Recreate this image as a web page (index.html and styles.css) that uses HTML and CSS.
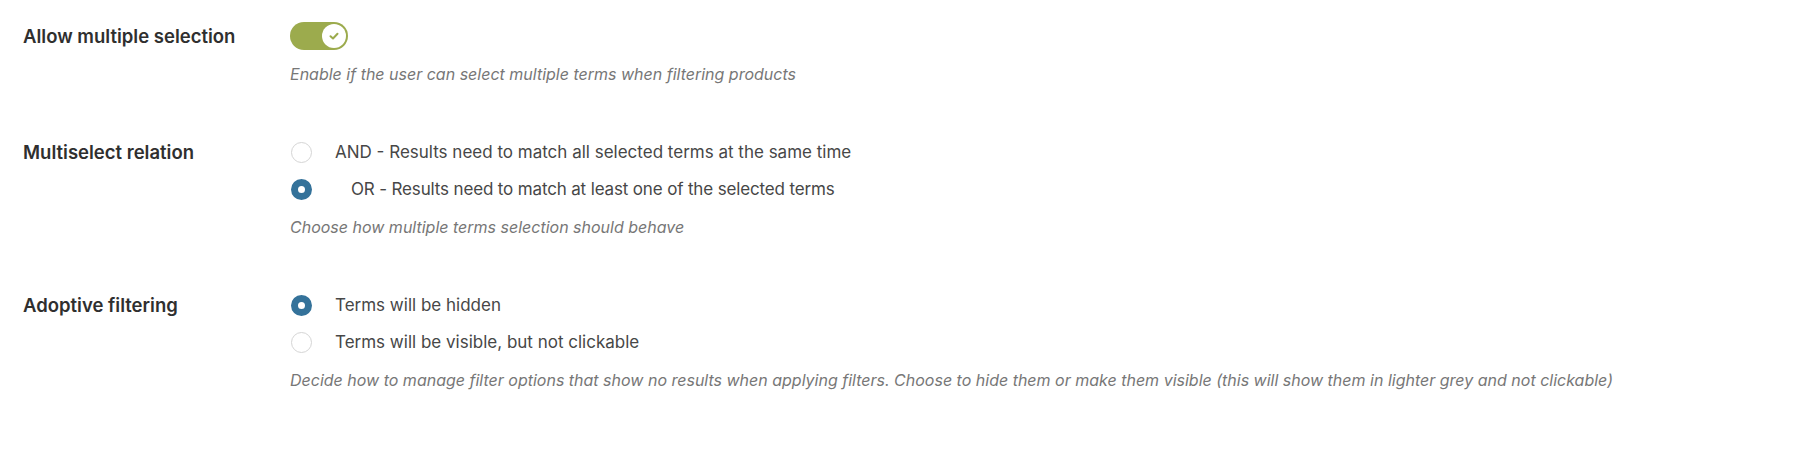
FILE: index.html
```html
<!DOCTYPE html>
<html lang="en">
<head>
<meta charset="utf-8">
<title>Filter settings</title>
<link rel="stylesheet" href="styles.css">
</head>
<body>
<div class="settings">
  <div class="row">
    <div class="label">Allow multiple selection</div>
    <div class="control">
      <div class="toggle">
        <span class="knob">
          <svg width="12" height="12" viewBox="0 0 12 12"><path d="M2.5 6.2 L5 8.5 L9.5 3.8" fill="none" stroke="#9cab4d" stroke-width="2" stroke-linecap="round" stroke-linejoin="round"/></svg>
        </span>
      </div>
      <div class="desc">Enable if the user can select multiple terms when filtering products</div>
    </div>
  </div>

  <div class="row">
    <div class="label">Multiselect relation</div>
    <div class="control">
      <div class="options">
        <div class="option"><span class="radio"></span><span class="otext">AND - Results need to match all selected terms at the same time</span></div>
        <div class="option"><span class="radio checked"></span><span class="otext indent">OR - Results need to match at least one of the selected terms</span></div>
      </div>
      <div class="desc">Choose how multiple terms selection should behave</div>
    </div>
  </div>

  <div class="row">
    <div class="label">Adoptive filtering</div>
    <div class="control">
      <div class="options">
        <div class="option"><span class="radio checked"></span><span class="otext">Terms will be hidden</span></div>
        <div class="option"><span class="radio"></span><span class="otext">Terms will be visible, but not clickable</span></div>
      </div>
      <div class="desc">Decide how to manage filter options that show no results when applying filters. Choose to hide them or make them visible (this will show them in lighter grey and not clickable)</div>
    </div>
  </div>
</div>
</body>
</html>
```

FILE: styles.css
```css
* { box-sizing: border-box; }
html, body { margin: 0; padding: 0; background: #ffffff; }
body {
  font-family: Inter, "Noto Sans", "Liberation Sans", sans-serif;
  color: #333;
}
.settings {
  display: flex;
  flex-direction: column;
  gap: 54px;
  padding: 22px 0 0 23px;
}
.row {
  display: flex;
  align-items: flex-start;
}
.label {
  width: 267px;
  flex: none;
  font-size: 18.5px;
  font-weight: 600;
  line-height: 28px;
  color: #2f2f2f;
}
.control {
  display: flex;
  flex-direction: column;
  gap: 14px;
}
.toggle {
  width: 58px;
  height: 28px;
  border-radius: 14px;
  background: #9cab4d;
  display: flex;
  justify-content: flex-end;
  align-items: center;
  padding-right: 2px;
}
.knob {
  width: 24px;
  height: 24px;
  border-radius: 50%;
  background: #fff;
  display: flex;
  align-items: center;
  justify-content: center;
}
.desc {
  font-size: 16px;
  font-style: italic;
  line-height: 20px;
  color: #777;
}
.options {
  display: flex;
  flex-direction: column;
  gap: 9px;
}
.option {
  display: flex;
  align-items: center;
  height: 28px;
}
.radio {
  width: 21px;
  height: 21px;
  border-radius: 50%;
  border: 1px solid #d5d5d5;
  background: #fff;
  flex: none;
  margin-left: 1px;
  margin-right: 23px;
}
.radio.checked {
  border: 7px solid #34729a;
  background: #fff;
}
.otext {
  font-size: 17px;
  color: #474747;
}
.otext.indent { margin-left: 16px; letter-spacing: -0.15px; }
```
